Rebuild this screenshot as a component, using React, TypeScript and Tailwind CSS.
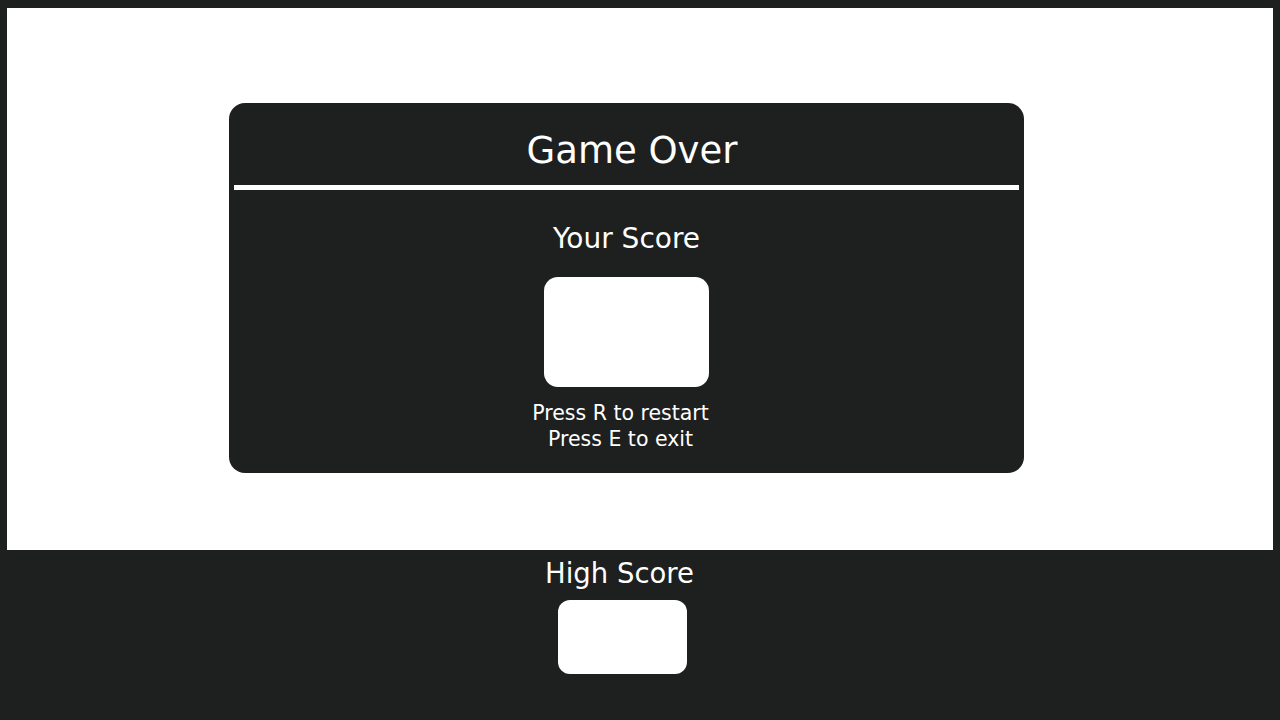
import React from 'react';

function ScoreBox({ size }: { size: 'lg' | 'sm' }) {
  return size === 'lg' ? (
    <div className="w-[165px] h-[110px] rounded-[14px] bg-white" />
  ) : (
    <div className="w-[129px] h-[74px] rounded-[12px] bg-white" />
  );
}

function App() {
  return (
    <div
      className="h-screen w-full bg-[#1e2020] text-white flex flex-col overflow-hidden"
      style={{ fontFamily: '"DejaVu Sans", Verdana, sans-serif' }}
    >
      {/* game area */}
      <div className="mx-[7px] mt-[8px] h-[542px] bg-white flex items-start">
        <div className="ml-[222px] mt-[95px] w-[795px] h-[370px] rounded-[16px] bg-[#1e2020] px-[5px] flex flex-col items-center">
          <h1 className="pt-[29px] text-[37px] leading-none ml-[11px]">Game Over</h1>
          <div className="mt-[16px] h-[5px] w-full bg-white" />
          <h2 className="mt-[35px] text-[28px] leading-none">Your Score</h2>
          <div className="mt-[24px]">
            <ScoreBox size="lg" />
          </div>
          <div className="mt-[13px] mr-[12px] text-[20.5px] leading-[26px] text-center">
            <p>Press R to restart</p>
            <p>Press E to exit</p>
          </div>
        </div>
      </div>

      {/* high score */}
      <div className="ml-[542px] w-[160px] flex flex-col items-center">
        <h2 className="mt-[10px] text-[27.5px] leading-none mr-[5px]">High Score</h2>
        <div className="mt-[12px]">
          <ScoreBox size="sm" />
        </div>
      </div>
    </div>
  );
}

export default App;
